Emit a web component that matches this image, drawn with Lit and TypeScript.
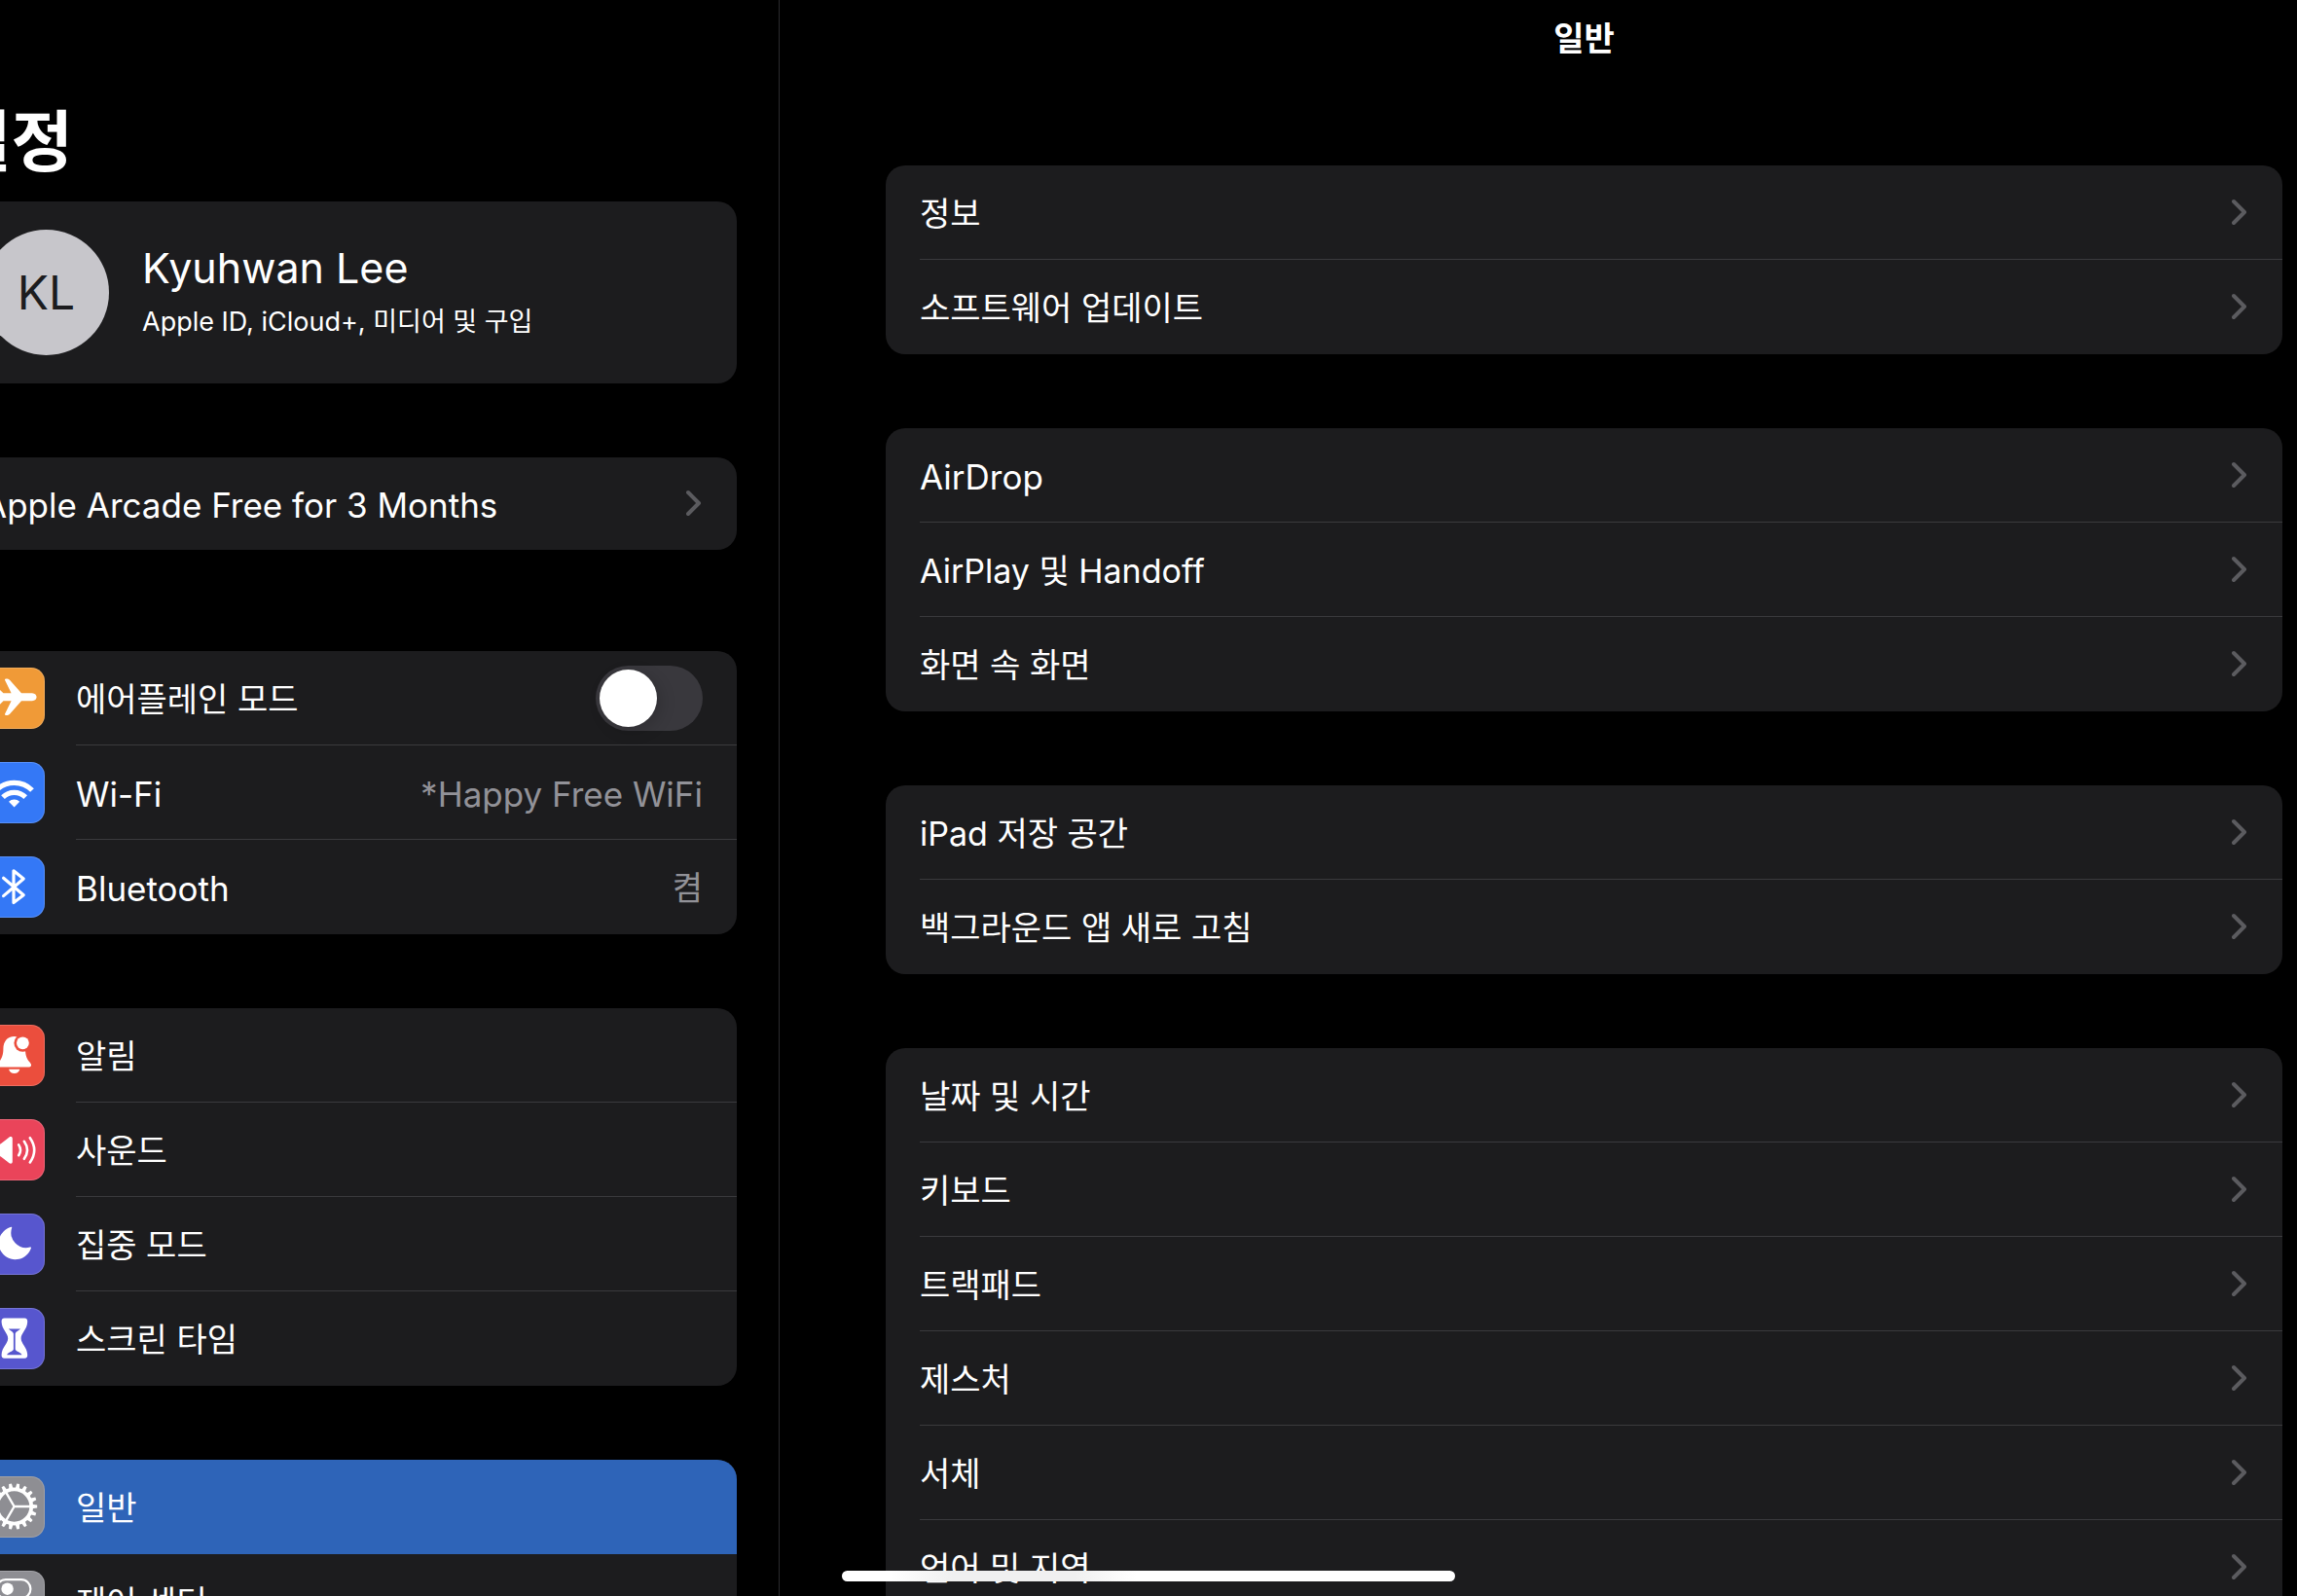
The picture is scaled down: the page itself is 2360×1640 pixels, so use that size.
import { LitElement, html, svg, css, nothing } from "lit";
import { customElement, property, state } from "lit/decorators.js";

type IconName =
  | "airplane" | "wifi" | "bluetooth" | "bell" | "speaker"
  | "moon" | "hourglass" | "gear" | "switches";

interface Row {
  label: string;
  icon?: IconName;
  value?: string;
  toggle?: boolean;
  chevron?: boolean;
}

const TINTS: Record<IconName, string> = {
  airplane: "orange",
  wifi: "blue",
  bluetooth: "blue",
  bell: "red",
  speaker: "pink",
  moon: "indigo",
  hourglass: "indigo",
  gear: "gray",
  switches: "gray",
};

const GEAR_TEETH = Array.from({ length: 18 }, (_, i) => i * 20);

const GLYPHS: Record<IconName, unknown> = {
  airplane: svg`<path fill="#fff" d="M39 26.3H50C53 26.3 54.6 28.6 54.6 30.3S53 34.3 50 34.3H39L27 47.8C25.6 49.2 21.8 49.8 22 47.8L28.6 34.3H20.5L16 38.6C15 39.6 12.6 39.6 13 38L15.2 30.3L13 22.8C12.6 21 15 21 16 22L20.5 26.3H28.6L22 12.8C21.8 10.8 25.6 11.4 27 12.8Z"/>`,
  wifi: svg`<g fill="none" stroke="#fff" stroke-width="5.2"><path d="M13.2 29A26 26 0 0 1 50 29"/><path d="M20 36.2A16.4 16.4 0 0 1 43.2 36.2"/></g><path fill="#fff" d="M31.6 46.4L26 40.8A8 8 0 0 1 37.2 40.8Z"/>`,
  bluetooth: svg`<path fill="none" stroke="#fff" stroke-width="3.2" stroke-linejoin="round" stroke-linecap="round" d="M20.6 22.2L41.2 39.8L31 47.6V14.8L41.2 23L20.6 40.6"/>`,
  bell: svg`<path fill="#fff" d="M31.6 12C24.6 12 20.4 17.4 20.4 24.6C20.4 32 18.4 35.6 15.4 38.8C13.4 41 13.8 43.4 16.4 43.4H47C49.4 43.4 49.8 41 47.8 38.8C44.8 35.6 43 32 43 24.6C43 17.4 38.6 12 31.6 12Z"/><circle cx="40.4" cy="18.8" r="9" fill="#eb4e3d"/><circle cx="40.4" cy="18.8" r="6.4" fill="#fff"/><path fill="#fff" d="M26 45.8H37.4C36.6 48.6 34.4 50 31.7 50S26.8 48.6 26 45.8Z"/>`,
  speaker: svg`<path fill="#fff" d="M11 25.6H17.6L26.6 18.6C28 17.6 29.8 18.2 29.8 20V43.8C29.8 45.6 28 46.2 26.6 45.2L17.6 38.2H11C9.4 38.2 8.6 37.4 8.6 36V27.8C8.6 26.4 9.4 25.6 11 25.6Z"/><g fill="none" stroke="#fff" stroke-width="2.6" stroke-linecap="round"><path d="M36.2 26.4Q39.8 31.8 36.2 37.2"/><path d="M41.8 22.8Q48.2 31.8 41.8 40.8"/><path d="M47.8 19.2Q56.6 31.8 47.8 44.4"/></g>`,
  moon: svg`<path fill="#fff" d="M28.4 13.8A17 17 0 1 0 49 35.2C49.2 34.6 48.6 34.2 48 34.6A15.6 15.6 0 0 1 29.2 14.6C29.4 14 29 13.6 28.4 13.8Z"/>`,
  hourglass: svg`<path fill="#fff" d="M21.6 10.6H42.2C44.4 10.6 45.4 12 45.2 14.4C44.8 22.4 38.6 25.6 38.6 31.2S44.8 40 45.2 48C45.4 50.4 44.4 51.8 42.2 51.8H21.6C19.4 51.8 18.4 50.4 18.6 48C19 40 25.2 36.8 25.2 31.2S19 22.4 18.6 14.4C18.4 12 19.4 10.6 21.6 10.6Z"/><path fill="#5756ce" d="M26 21.4H37.8C37.8 22.4 33 24 32.7 26.4V42.4C33 44.6 39.4 45.8 39.4 48.2H24.2C24.2 45.8 30.6 44.6 30.9 42.4V26.4C30.6 24 26 22.4 26 21.4Z"/>`,
  gear: svg`<g fill="none" stroke="#fff"><circle cx="31.6" cy="31" r="17.6" stroke-width="3.8"/><path stroke-width="2.4" d="M31.6 31H48M31.6 31L23.4 16.8M31.6 31L23.4 45.2"/></g>${GEAR_TEETH.map(
    (a) => svg`<path fill="#fff" transform="rotate(${a + 10} 31.6 31)" d="M29.4 13L30.2 7.4H33L33.8 13Z"/>`,
  )}`,
  switches: svg`<rect x="13.4" y="9.2" width="35" height="19" rx="9.5" fill="none" stroke="#fff" stroke-width="2.2"/><circle cx="24.6" cy="18.7" r="6.2" fill="#fff"/><rect x="12.4" y="34" width="37" height="21" rx="10.5" fill="#fff"/>`,
};

const PROMO: Row[] = [{ label: "Apple Arcade Free for 3 Months", chevron: true }];

const SIDEBAR: Row[][] = [
  [
    { label: "에어플레인 모드", icon: "airplane", toggle: true },
    { label: "Wi-Fi", icon: "wifi", value: "*Happy Free WiFi" },
    { label: "Bluetooth", icon: "bluetooth", value: "켬" },
  ],
  [
    { label: "알림", icon: "bell" },
    { label: "사운드", icon: "speaker" },
    { label: "집중 모드", icon: "moon" },
    { label: "스크린 타임", icon: "hourglass" },
  ],
  [
    { label: "일반", icon: "gear" },
    { label: "제어 센터", icon: "switches" },
  ],
];

const DETAIL: Row[][] = [
  ["정보", "소프트웨어 업데이트"],
  ["AirDrop", "AirPlay 및 Handoff", "화면 속 화면"],
  ["iPad 저장 공간", "백그라운드 앱 새로 고침"],
  ["날짜 및 시간", "키보드", "트랙패드", "제스처", "서체", "언어 및 지역"],
].map((group) => group.map((label) => ({ label, chevron: true })));

/** Language of a label: purely Latin strings are set slightly larger than Korean ones. */
const langOf = (text: string) => (/^[\x20-\x7e]+$/.test(text) ? "en" : "ko");

@customElement("settings-icon")
class SettingsIcon extends LitElement {
  @property() name: IconName = "gear";

  static styles = css`
    :host { display: block; flex: none; }
    .tile {
      display: block;
      box-sizing: border-box;
      width: 63px;
      height: 63px;
      border-radius: 14px;
      box-shadow: inset 0 0 0 1px rgba(255, 255, 255, 0.18);
    }
    .orange { background: #f09a37; }
    .blue { background: #3478f6; }
    .red { background: #eb4e3d; }
    .pink { background: #ea445a; }
    .indigo { background: #5756ce; }
    .gray { background: #8e8e93; }
  `;

  render() {
    return html`<svg class="tile ${TINTS[this.name]}" viewBox="0 0 63 63" aria-hidden="true">${GLYPHS[this.name]}</svg>`;
  }
}

@customElement("settings-group")
class SettingsGroup extends LitElement {
  @property({ attribute: false }) rows: Row[] = [];
  @property() selected = "";
  @state() private airplane = false;

  static styles = css`
    :host { display: block; }
    .group {
      margin: 0;
      padding: 0;
      list-style: none;
      background: #1c1c1e;
      border-radius: 20px;
      overflow: hidden;
    }
    .row {
      display: flex;
      align-items: center;
      gap: 32px;
      height: var(--row-height, 97px);
      padding-left: 35px;
      color: #fff;
      text-decoration: none;
    }
    .body {
      flex: 1;
      min-width: 0;
      display: flex;
      align-items: center;
      align-self: stretch;
      justify-content: space-between;
      padding-right: 35px;
      border-bottom: 1px solid #3a3a3d;
    }
    .item:last-child .body { border-bottom-color: transparent; }
    .selected { background: #2e64b8; }
    .selected .body { border-bottom-color: transparent; }
    .label, .value { padding-top: 3px; white-space: nowrap; }
    .label:lang(en), .value:lang(en) { font-size: 35px; }
    .value { color: #929298; }
    .chevron { width: 17px; height: 28px; flex: none; }
    .switch {
      appearance: none;
      flex: none;
      width: 110px;
      height: 67px;
      margin: 0;
      padding: 4px;
      border-radius: 34px;
      background: #39383d;
      cursor: pointer;
    }
    .switch::before {
      content: "";
      display: block;
      width: 59px;
      height: 59px;
      border-radius: 50%;
      background: #fff;
      box-shadow: 4px 4px 16px rgba(0, 0, 0, 0.16);
    }
    .switch:checked { background: #30d158; }
    .switch:checked::before { margin-left: auto; }
  `;

  private content(row: Row) {
    return html`
      ${row.icon ? html`<settings-icon name=${row.icon}></settings-icon>` : nothing}
      <span class="body">
        <span class="label" lang=${langOf(row.label)}>${row.label}</span>
        ${row.value ? html`<span class="value" lang=${langOf(row.value)}>${row.value}</span>` : nothing}
        ${row.toggle
          ? html`<input class="switch" id="toggle" type="checkbox" role="switch"
              .checked=${this.airplane}
              @change=${(e: Event) => (this.airplane = (e.target as HTMLInputElement).checked)} />`
          : nothing}
        ${row.chevron
          ? html`<svg class="chevron" viewBox="0 0 17 28" aria-hidden="true">
              <path d="M2 3L13 14L2 25" fill="none" stroke="#5b5b5f" stroke-width="4" stroke-linecap="round" stroke-linejoin="round" />
            </svg>`
          : nothing}
      </span>
    `;
  }

  render() {
    return html`<ul class="group">
      ${this.rows.map(
        (row) => html`<li class="item">
          ${row.toggle
            ? html`<label class="row" for="toggle">${this.content(row)}</label>`
            : html`<a class="row ${row.label === this.selected ? "selected" : ""}" href="#">${this.content(row)}</a>`}
        </li>`,
      )}
    </ul>`;
  }
}

@customElement("app-root")
class AppRoot extends LitElement {
  static styles = css`
    :host {
      display: block;
      background: #000;
      color: #fff;
      font-family: Inter, "Noto Sans CJK KR", sans-serif;
      font-size: 34px;
      line-height: 48px;
    }
    .shell {
      position: relative;
      display: flex;
      height: 100vh;
      overflow: hidden;
    }
    .sidebar {
      flex: none;
      box-sizing: border-box;
      width: 853px;
      margin-left: -52px;
      padding: 98px 43px 0 0;
      border-right: 1px solid #2b2b2d;
      overflow: hidden;
    }
    .title {
      margin: 0 0 13px;
      font-size: 69px;
      line-height: 96px;
      font-weight: 700;
    }
    .groups { display: flex; flex-direction: column; gap: 76px; }
    .promo { --row-height: 95px; margin-bottom: 28px; }
    .profile {
      display: flex;
      align-items: center;
      gap: 34px;
      box-sizing: border-box;
      height: 187px;
      padding: 0 35px;
      border-radius: 20px;
      background: #1c1c1e;
      color: #fff;
      text-decoration: none;
    }
    .avatar {
      display: flex;
      align-items: center;
      justify-content: center;
      flex: none;
      width: 129px;
      height: 129px;
      border-radius: 50%;
      background: #c7c6cb;
      color: #1c1c1e;
      font-size: 48px;
    }
    .who { display: flex; flex-direction: column; gap: 4px; white-space: nowrap; }
    .name { font-size: 43px; line-height: 56px; }
    .services { font-size: 27px; line-height: 48px; }
    .detail {
      flex: 1;
      min-width: 0;
      padding: 0 15px 0 109px;
      overflow: hidden;
    }
    .heading {
      margin: 0 0 90px;
      font-size: 34px;
      line-height: 80px;
      font-weight: 600;
      text-align: center;
    }
    .home {
      position: absolute;
      bottom: 15px;
      left: 50%;
      width: 630px;
      height: 11px;
      margin-left: -315px;
      border-radius: 6px;
      background: linear-gradient(90deg, #fff 8%, #f0f0f0 18%, #f0f0f0 38%, #fff 48%);
    }
  `;

  render() {
    return html`<div class="shell">
      <nav class="sidebar">
        <h1 class="title">설정</h1>
        <div class="groups">
          <a class="profile" href="#">
            <span class="avatar">KL</span>
            <span class="who">
              <span class="name">Kyuhwan Lee</span>
              <span class="services">Apple ID, iCloud+, 미디어 및 구입</span>
            </span>
          </a>
          <settings-group class="promo" .rows=${PROMO}></settings-group>
          ${SIDEBAR.map((rows) => html`<settings-group .rows=${rows} selected="일반"></settings-group>`)}
        </div>
      </nav>
      <main class="detail">
        <h2 class="heading">일반</h2>
        <div class="groups">
          ${DETAIL.map((rows) => html`<settings-group .rows=${rows}></settings-group>`)}
        </div>
      </main>
      <div class="home"></div>
    </div>`;
  }
}
